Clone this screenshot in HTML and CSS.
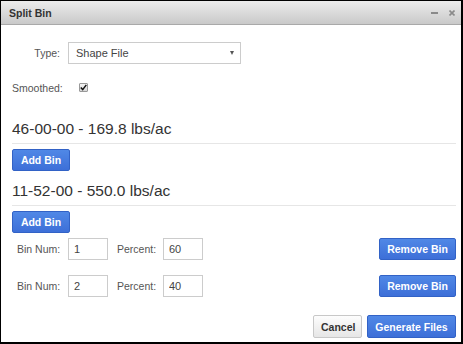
FILE: index.html
```html
<!DOCTYPE html>
<html lang="en">
<head>
    <meta charset="UTF-8">
    <title>Split Bin</title>
    <link rel="stylesheet" href="styles.css">
</head>
<body>
    <div class="window">
        <div class="titlebar">
            <span class="title">Split Bin</span>
            <span class="tools">
                <span class="tool-min"></span>
                <svg class="tool-close" width="6" height="6" viewBox="0 0 6 6"><path d="M0.5 0.5 L5.5 5.5 M5.5 0.5 L0.5 5.5" stroke="#8a8a8a" stroke-width="1.6"/></svg>
            </span>
        </div>
        <div class="content">
            <div class="form-row">
                <label class="type-label">Type:</label>
                <div class="select">
                    <span>Shape File</span>
                    <span class="arrow"></span>
                </div>
            </div>
            <div class="form-row smooth-row">
                <label>Smoothed:</label>
                <span class="check">
                    <svg width="7" height="7" viewBox="0 0 7 7"><path d="M0.8 3.6 L2.7 5.6 L6.3 0.9" fill="none" stroke="#111" stroke-width="1.5"/></svg>
                </span>
            </div>

            <h3 class="product">46-00-00 - 169.8 lbs/ac</h3>
            <div class="add-row"><button class="btn btn-blue">Add Bin</button></div>

            <h3 class="product second">11-52-00 - 550.0 lbs/ac</h3>
            <div class="add-row"><button class="btn btn-blue">Add Bin</button></div>

            <div class="bin-row">
                <label class="bin-label">Bin Num:</label>
                <input class="small-input" type="text" value="1">
                <label class="pct-label">Percent:</label>
                <input class="small-input" type="text" value="60">
                <button class="btn btn-blue remove">Remove Bin</button>
            </div>
            <div class="bin-row second-bin">
                <label class="bin-label">Bin Num:</label>
                <input class="small-input" type="text" value="2">
                <label class="pct-label">Percent:</label>
                <input class="small-input" type="text" value="40">
                <button class="btn btn-blue remove">Remove Bin</button>
            </div>

            <div class="footer">
                <button class="btn btn-plain">Cancel</button>
                <button class="btn btn-blue">Generate Files</button>
            </div>
        </div>
    </div>
</body>
</html>
```

FILE: styles.css
```css
body {
    margin: 0;
    font-family: "Liberation Sans", Arial, sans-serif;
    background-color: #fff;
}
.window {
    width: 463px;
    height: 344px;
    box-sizing: border-box;
    border-style: solid;
    border-color: #000;
    border-width: 1px 2px 2px 1px;
    background-color: #fff;
}
.titlebar {
    height: 24px;
    box-sizing: border-box;
    border-bottom: 1px solid #a9a9a9;
    background: linear-gradient(#ececec, #c9c9c9);
    display: flex;
    align-items: center;
    padding: 0 6px 0 8px;
}
.title {
    font-size: 10.5px;
    font-weight: bold;
    color: #333;
}
.tools {
    margin-left: auto;
    display: flex;
    align-items: center;
    gap: 11px;
}
.tool-min {
    width: 7px;
    height: 2px;
    background-color: #8a8a8a;
    margin-top: 1px;
}
.content {
    padding: 17px 5px 0 11px;
    font-size: 10.5px;
    color: #555;
}
.form-row {
    display: flex;
    align-items: center;
    height: 22px;
}
.type-label {
    width: 48px;
    text-align: right;
    margin-right: 8px;
}
.select {
    width: 173px;
    height: 22px;
    box-sizing: border-box;
    border: 1px solid #ccc;
    display: flex;
    align-items: center;
    padding: 0 6px 0 7px;
    color: #444;
    font-size: 11px;
}
.arrow {
    margin-left: auto;
    width: 0;
    height: 0;
    border-left: 2.5px solid transparent;
    border-right: 2.5px solid transparent;
    border-top: 4px solid #555;
}
.smooth-row {
    margin-top: 14px;
    height: 20px;
}
.check {
    margin-left: 16px;
    width: 9px;
    height: 9px;
    box-sizing: border-box;
    border: 1px solid #999;
    border-radius: 1px;
    background: linear-gradient(#f4f4f4, #d8d8d8);
    display: flex;
    align-items: center;
    justify-content: center;
    margin-top: -1px;
}
.product {
    margin: 21px 0 0 0;
    padding-bottom: 4px;
    font-size: 15.5px;
    line-height: 20px;
    font-weight: normal;
    color: #333;
    border-bottom: 1px solid #e6e6e6;
}
.product.second {
    margin-top: 10px;
}
.add-row {
    margin-top: 5px;
    display: flex;
}
.btn {
    height: 22px;
    box-sizing: border-box;
    padding: 0 7px;
    font-family: "Liberation Sans", Arial, sans-serif;
    font-size: 10.5px;
    font-weight: bold;
    border-radius: 2px;
    cursor: pointer;
}
.btn-blue {
    color: #fff;
    background: linear-gradient(#5088e6, #3d6fd8);
    border: 1px solid #3262c6;
}
.btn-plain {
    color: #333;
    background: linear-gradient(#fdfdfd, #e6e6e6);
    border: 1px solid #c8c8c8;
}
.add-row .btn {
    width: 58px;
}
.bin-row {
    margin-top: 5px;
    display: flex;
    align-items: center;
    padding-left: 5px;
}
.bin-row.second-bin {
    margin-top: 15px;
}
.bin-label {
    width: 51px;
}
.pct-label {
    width: 46px;
    margin-left: 9px;
}
.small-input {
    width: 40px;
    height: 22px;
    box-sizing: border-box;
    border: 1px solid #ccc;
    padding: 0 5px;
    font-family: "Liberation Sans", Arial, sans-serif;
    font-size: 11px;
    color: #444;
}
.remove {
    margin-left: auto;
    width: 77px;
}
.footer {
    margin-top: 18px;
    display: flex;
    justify-content: flex-end;
    gap: 5px;
}
.footer .btn {
    height: 23px;
}
.footer .btn-plain {
    width: 49px;
}
.footer .btn-blue {
    width: 89px;
}
```
